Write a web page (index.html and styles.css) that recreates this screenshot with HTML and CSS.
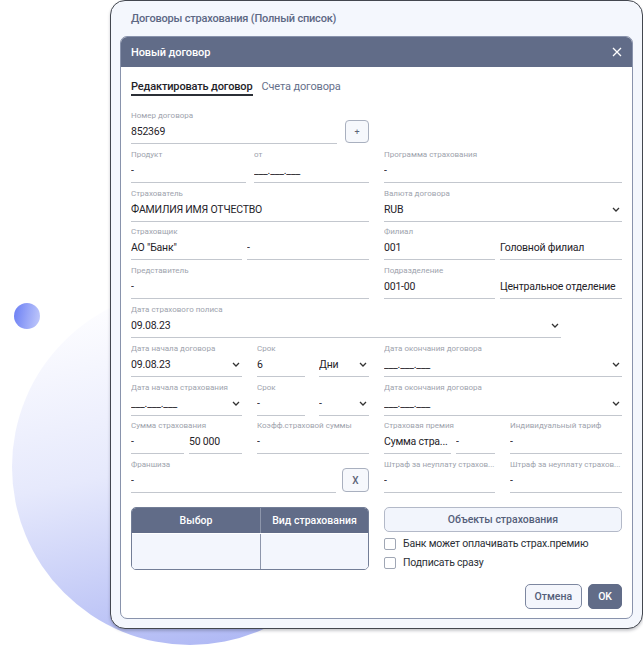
FILE: index.html
```html
<!DOCTYPE html>
<html lang="ru">
<head>
<meta charset="utf-8">
<title>Новый договор</title>
<link rel="stylesheet" href="styles.css">
</head>
<body>
<div class="deco-circle"></div>
<div class="deco-dot"></div>

<div class="frame">
  <div class="frame-title">Договоры страхования (Полный список)</div>

  <div class="modal">
    <div class="modal-head">
      <span>Новый договор</span>
      <svg class="close" width="10" height="10" viewBox="0 0 10 10"><path d="M1 1L9 9M9 1L1 9" stroke="#fff" stroke-width="1.3" fill="none"/></svg>
    </div>

    <div class="modal-body">
      <div class="tabs">
        <span class="tab active">Редактировать договор</span>
        <span class="tab">Счета договора</span>
      </div>

      <div class="form">
        <!-- row 1 -->
        <div class="line tight">
          <div class="field">
            <div class="label">Номер договора</div>
            <div class="value">852369</div>
          </div>
          <div class="small-btn plus">+</div>
        </div>
        <div></div>

        <!-- row 2 -->
        <div class="line tight">
          <div class="field">
            <div class="label">Продукт</div>
            <div class="value">-</div>
          </div>
          <div class="field">
            <div class="label">от</div>
            <div class="value">___.___.___</div>
          </div>
        </div>
        <div class="field">
          <div class="label">Программа страхования</div>
          <div class="value">-</div>
        </div>

        <!-- row 3 -->
        <div class="field">
          <div class="label">Страхователь</div>
          <div class="value">ФАМИЛИЯ ИМЯ ОТЧЕСТВО</div>
        </div>
        <div class="field">
          <div class="label">Валюта договора</div>
          <div class="value select">RUB<svg class="chev" width="8" height="5" viewBox="0 0 8 5"><path d="M1 1L4 4L7 1" stroke="#333" stroke-width="1.3" fill="none"/></svg></div>
        </div>

        <!-- row 4 -->
        <div class="field">
          <div class="label">Страховщик</div>
          <div class="values">
            <div class="value short">АО "Банк"</div>
            <div class="value">-</div>
          </div>
        </div>
        <div class="field">
          <div class="label">Филиал</div>
          <div class="values">
            <div class="value short">001</div>
            <div class="value">Головной филиал</div>
          </div>
        </div>

        <!-- row 5 -->
        <div class="field">
          <div class="label">Представитель</div>
          <div class="value">-</div>
        </div>
        <div class="field">
          <div class="label">Подразделение</div>
          <div class="values">
            <div class="value short">001-00</div>
            <div class="value">Центральное отделение</div>
          </div>
        </div>

        <!-- row 6 -->
        <div class="field span">
          <div class="label">Дата страхового полиса</div>
          <div class="value select">09.08.23<svg class="chev" width="8" height="5" viewBox="0 0 8 5"><path d="M1 1L4 4L7 1" stroke="#333" stroke-width="1.3" fill="none"/></svg></div>
        </div>

        <!-- row 7 -->
        <div class="line">
          <div class="field short">
            <div class="label">Дата начала договора</div>
            <div class="value select">09.08.23<svg class="chev" width="8" height="5" viewBox="0 0 8 5"><path d="M1 1L4 4L7 1" stroke="#333" stroke-width="1.3" fill="none"/></svg></div>
          </div>
          <div class="field">
            <div class="label">Срок</div>
            <div class="values wide">
              <div class="value">6</div>
              <div class="value select">Дни<svg class="chev" width="8" height="5" viewBox="0 0 8 5"><path d="M1 1L4 4L7 1" stroke="#333" stroke-width="1.3" fill="none"/></svg></div>
            </div>
          </div>
        </div>
        <div class="field">
          <div class="label">Дата окончания договора</div>
          <div class="value select">___.___.___<svg class="chev" width="8" height="5" viewBox="0 0 8 5"><path d="M1 1L4 4L7 1" stroke="#333" stroke-width="1.3" fill="none"/></svg></div>
        </div>

        <!-- row 8 -->
        <div class="line">
          <div class="field short">
            <div class="label">Дата начала страхования</div>
            <div class="value select">___.___.___<svg class="chev" width="8" height="5" viewBox="0 0 8 5"><path d="M1 1L4 4L7 1" stroke="#333" stroke-width="1.3" fill="none"/></svg></div>
          </div>
          <div class="field">
            <div class="label">Срок</div>
            <div class="values wide">
              <div class="value">-</div>
              <div class="value select">-<svg class="chev" width="8" height="5" viewBox="0 0 8 5"><path d="M1 1L4 4L7 1" stroke="#333" stroke-width="1.3" fill="none"/></svg></div>
            </div>
          </div>
        </div>
        <div class="field">
          <div class="label">Дата окончания договора</div>
          <div class="value select">___.___.___<svg class="chev" width="8" height="5" viewBox="0 0 8 5"><path d="M1 1L4 4L7 1" stroke="#333" stroke-width="1.3" fill="none"/></svg></div>
        </div>

        <!-- row 9 -->
        <div class="line">
          <div class="field short">
            <div class="label">Сумма страхования</div>
            <div class="values">
              <div class="value">-</div>
              <div class="value">50 000</div>
            </div>
          </div>
          <div class="field">
            <div class="label">Коэфф.страховой суммы</div>
            <div class="value">-</div>
          </div>
        </div>
        <div class="line">
          <div class="field short">
            <div class="label">Страховая премия</div>
            <div class="values">
              <div class="value premium">Сумма стра...</div>
              <div class="value">-</div>
            </div>
          </div>
          <div class="field">
            <div class="label">Индивидуальный тариф</div>
            <div class="value">-</div>
          </div>
        </div>

        <!-- row 10 -->
        <div class="line narrow">
          <div class="field">
            <div class="label">Франшиза</div>
            <div class="value">-</div>
          </div>
          <div class="small-btn cross">X</div>
        </div>
        <div class="line">
          <div class="field short">
            <div class="label">Штраф за неуплату страхов...</div>
            <div class="value">-</div>
          </div>
          <div class="field">
            <div class="label">Штраф за неуплату страхов...</div>
            <div class="value">-</div>
          </div>
        </div>
      </div>

      <div class="bottom">
        <div class="table">
          <div class="th">Выбор</div>
          <div class="th">Вид страхования</div>
          <div class="td"></div>
          <div class="td"></div>
        </div>
        <div class="side">
          <div class="objects-btn">Объекты страхования</div>
          <label class="check"><span class="box"></span>Банк может оплачивать страх.премию</label>
          <label class="check"><span class="box"></span>Подписать сразу</label>
        </div>
      </div>

      <div class="footer">
        <div class="btn">Отмена</div>
        <div class="btn primary">OK</div>
      </div>
    </div>
  </div>
</div>
</body>
</html>
```

FILE: styles.css
```css
body {
	margin: 0;
	width: 643px; height: 660px;
	overflow: hidden;
	position: relative;
	background: #fff;
	font-family: Roboto, "Noto Sans", sans-serif;
	color: #1f2329;
}

/* decoration behind the window */
.deco-circle {
	position: absolute; left: 12px; top: 289px;
	width: 356px; height: 356px;
	border-radius: 50%;
	background: linear-gradient(168deg, #fdfdff 8%, #e6e9fc 48%, #a7b1f3 100%);
}
.deco-dot {
	position: absolute; left: 14px; top: 303px;
	width: 26px; height: 26px;
	border-radius: 50%;
	background: linear-gradient(100deg, #6a7ef4, #c3cbfb);
}

/* outer window */
.frame {
	position: relative;
	margin-left: 110px;
	width: 533px;
	box-sizing: border-box;
	border: 1px solid #43474f;
	border-radius: 15px;
	background: #f4f7fd;
	padding: 0 9px 9px 9px;
	box-shadow: 0 2px 3px rgba(40, 45, 60, .25);
}
.frame-title {
	height: 35px; line-height: 35px;
	padding-left: 11px;
	font-size: 11px; font-weight: 500;
	letter-spacing: -0.2px;
	color: #5d6884;
}

/* modal */
.modal {
	background: #fff;
	border: 1px solid #8993ac;
	border-radius: 7px;
	overflow: hidden;
}
.modal-head {
	height: 30px;
	background: #616c88;
	display: flex; align-items: center; justify-content: space-between;
	padding: 0 10px;
	color: #fff;
	font-size: 11px; font-weight: 500;
	letter-spacing: -0.1px;
}
.modal-body { padding: 13px 10px 9px; }

.tabs {
	display: flex; gap: 9px;
	font-size: 11px; line-height: 14px;
	letter-spacing: -0.15px;
	margin-bottom: 15px;
}
.tab { border-bottom: 2px solid transparent; color: #66708b; }
.tab.active { color: #1f2329; border-color: #2b2f36; font-weight: 500; }

/* form */
.form {
	display: grid;
	grid-template-columns: minmax(0, 1fr) minmax(0, 1fr);
	gap: 5.8px 15px;
}
.line { display: flex; gap: 15px; align-items: flex-end; min-width: 0; }
.line.tight { gap: 8px; }
.line.narrow { gap: 6px; }
.field { flex: 1; min-width: 0; }
.field.short { flex: 0 0 111px; }
.field.span { grid-column: 1 / 3; margin-right: 61px; }

.label {
	font-size: 8px; line-height: 10px;
	color: #9ea3ad;
	white-space: nowrap; overflow: hidden;
}
.values { display: flex; gap: 5px; }
.values.wide { gap: 14px; }
.values .value { flex: 1; }
.values .value.short { flex: 0 0 111px; }
.values .value.premium { flex: 0 0 67px; }
.value {
	font-size: 10.5px; line-height: 16px;
	letter-spacing: -0.2px;
	padding: 3px 0 3px;
	border-bottom: 1px solid #c3c7ce;
	white-space: nowrap; overflow: hidden;
	min-width: 0;
}
.value.select {
	display: flex; align-items: center; justify-content: space-between;
	padding-right: 2px;
}
.chev { flex: none; }

.small-btn {
	box-sizing: border-box;
	border: 1px solid #a9b0bf;
	border-radius: 4px;
	background: #f6f8fc;
	color: #5b6377;
	display: flex; align-items: center; justify-content: center;
	margin-bottom: 1px;
}
.small-btn.plus { flex: 0 0 24px; height: 23px; font-size: 9px; }
.small-btn.cross { flex: 0 0 27px; height: 24px; font-size: 10px; font-weight: 500; }

/* bottom area */
.bottom {
	display: grid;
	grid-template-columns: minmax(0, 1fr) minmax(0, 1fr);
	gap: 15px;
	margin-top: 14px;
}
.table {
	display: grid;
	grid-template-columns: 129px 1fr;
	border: 1px solid #737e97;
	border-radius: 5px;
	overflow: hidden;
}
.th {
	background: #616c88;
	color: #fff;
	font-size: 10.5px; font-weight: 500;
	height: 25px; line-height: 25px;
	text-align: center;
}
.td { background: #f3f6fd; height: 35px; }
.th:first-child, .td:nth-child(3) { border-right: 1px solid #8d96ab; }

.side { display: flex; flex-direction: column; gap: 5px; }
.objects-btn {
	height: 23px; line-height: 23px;
	border: 1px solid #b3b9c8;
	border-radius: 5px;
	background: #f2f5fc;
	text-align: center;
	font-size: 10.5px; font-weight: 500;
	color: #555f7a;
}
.check {
	display: flex; align-items: center; gap: 7px;
	font-size: 10.5px; line-height: 14px;
	letter-spacing: -0.2px;
	color: #2b2f36;
}
.check .box {
	width: 10px; height: 10px;
	border: 1px solid #a0a7b5;
	border-radius: 2px;
}

.footer {
	display: flex; justify-content: flex-end; gap: 6px;
	margin-top: 14px;
}
.btn {
	box-sizing: border-box;
	height: 25px; line-height: 23px;
	padding: 0 9px;
	border: 1px solid #7d87a0;
	border-radius: 5px;
	background: #f4f6fc;
	font-size: 10.5px; font-weight: 500;
	color: #555f7a;
}
.btn.primary { background: #616c88; border-color: #616c88; color: #fff; }
```
